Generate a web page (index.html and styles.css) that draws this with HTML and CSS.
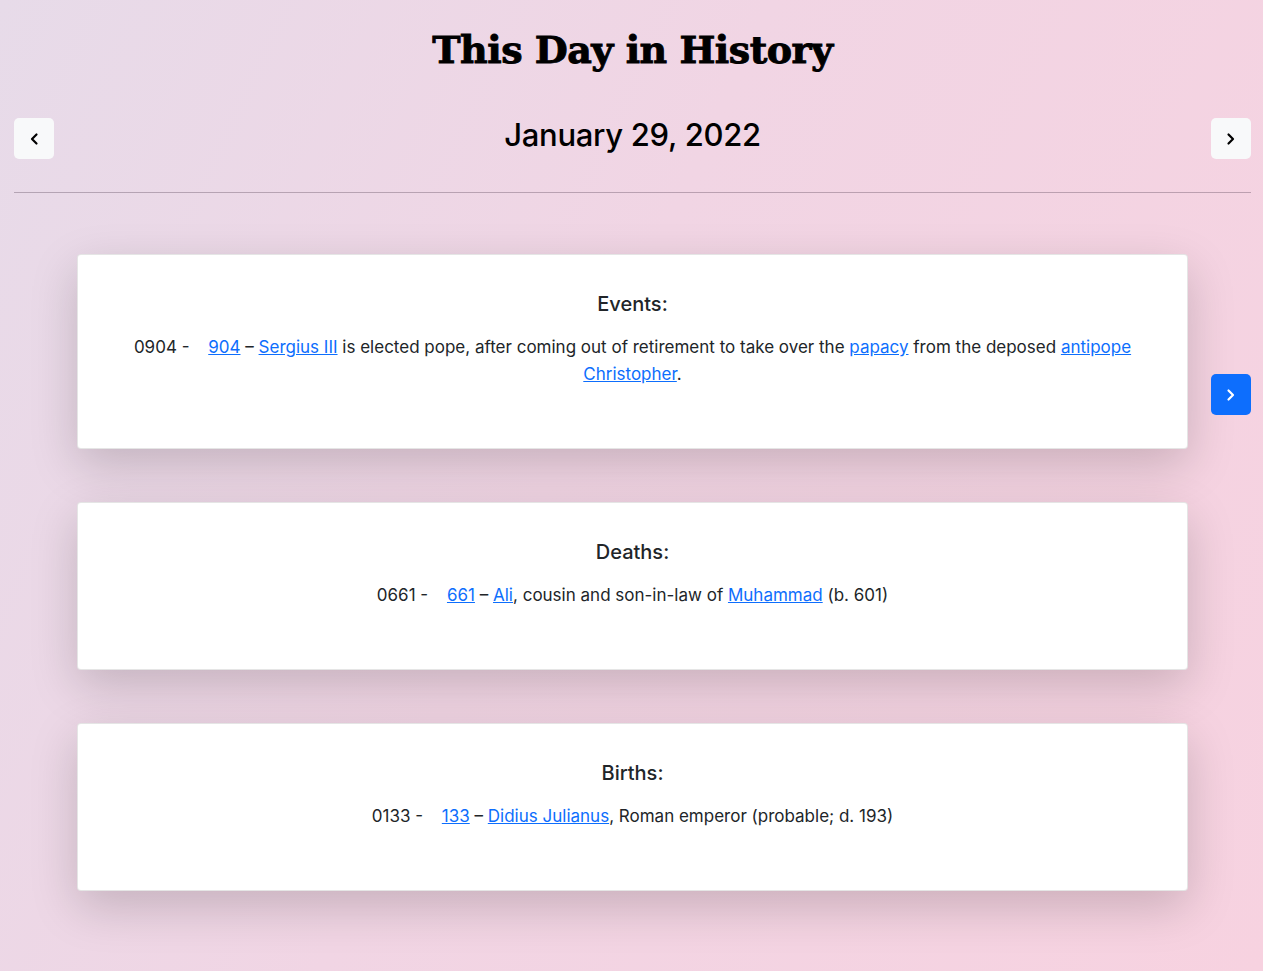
FILE: index.html
```html
<!DOCTYPE html>
<html lang="en">
<head>
<meta charset="utf-8">
<title>This Day in History</title>
<link rel="stylesheet" href="styles.css">
</head>
<body>
<div class="page">
  <h1 class="title">This Day in History</h1>
  <div class="date-row">
    <button class="btn btn-light" aria-label="Previous day">
      <svg width="16" height="16" viewBox="0 0 16 16"><path d="M10.5 3.5 6 8l4.5 4.5" fill="none" stroke="#000" stroke-width="2.2" stroke-linecap="round" stroke-linejoin="round"/></svg>
    </button>
    <h2 class="date">January 29, 2022</h2>
    <button class="btn btn-light" aria-label="Next day">
      <svg width="16" height="16" viewBox="0 0 16 16"><path d="M5.5 3.5 10 8l-4.5 4.5" fill="none" stroke="#000" stroke-width="2.2" stroke-linecap="round" stroke-linejoin="round"/></svg>
    </button>
  </div>
  <hr class="divider">

  <div class="section-row first">
    <div class="card">
      <h3 class="card-title">Events:</h3>
      <p class="card-text">0904 - <span class="gap"></span><a href="#">904</a> – <a href="#">Sergius III</a> is elected pope, after coming out of retirement to take over the <a href="#">papacy</a> from the deposed <a href="#">antipope</a> <a href="#">Christopher</a>.</p>
    </div>
    <button class="btn btn-primary side-btn" aria-label="Next event">
      <svg width="16" height="16" viewBox="0 0 16 16"><path d="M5.5 3.5 10 8l-4.5 4.5" fill="none" stroke="#fff" stroke-width="2.2" stroke-linecap="round" stroke-linejoin="round"/></svg>
    </button>
  </div>

  <div class="section-row">
    <div class="card">
      <h3 class="card-title">Deaths:</h3>
      <p class="card-text">0661 - <span class="gap"></span><a href="#">661</a> – <a href="#">Ali</a>, cousin and son-in-law of <a href="#">Muhammad</a> (b. 601)</p>
    </div>
  </div>

  <div class="section-row">
    <div class="card">
      <h3 class="card-title">Births:</h3>
      <p class="card-text">0133 - <span class="gap"></span><a href="#">133</a> – <a href="#">Didius Julianus</a>, Roman emperor (probable; d. 193)</p>
    </div>
  </div>
</div>
</body>
</html>
```

FILE: styles.css
```css
html, body {
  margin: 0;
  padding: 0;
}
body {
  min-height: 971px;
  background: linear-gradient(115deg, #e7dbe9 0%, #f1d5e4 45%, #f7d2e0 100%);
  font-family: "Inter", "Liberation Sans", sans-serif;
  color: #212529;
}
.page {
  padding: 0 12px 60px 14px;
}
.title {
  margin: 0;
  padding-top: 24px;
  text-align: center;
  font-family: "DejaVu Serif", serif;
  font-weight: 900;
  font-size: 38px;
  line-height: 52px;
  letter-spacing: -0.5px;
  color: #000;
  -webkit-text-stroke: 0.9px #000;
}
.date-row {
  display: flex;
  align-items: center;
  justify-content: space-between;
  margin-top: 42px;
}
.date {
  margin: 0;
  font-size: 31px;
  font-weight: 500;
  line-height: 36px;
  color: #000;
  letter-spacing: -0.3px;
  position: relative;
  top: -4px;
}
.btn {
  display: flex;
  align-items: center;
  justify-content: center;
  width: 40px;
  height: 41px;
  border: none;
  border-radius: 5px;
  padding: 0;
  cursor: pointer;
}
.btn-light {
  background: #f8f9fa;
}
.btn-primary {
  background: #0d6efd;
}
.divider {
  margin: 33px 0 0;
  border: 0;
  border-top: 1px solid rgba(60, 40, 60, 0.3);
}
.section-row {
  display: grid;
  grid-template-columns: 63px 1fr 63px;
  margin-top: 53px;
}
.section-row.first {
  margin-top: 61px;
}
.card {
  grid-column: 2;
  background: #fff;
  border-radius: 4px;
  border: 1px solid rgba(0, 0, 0, 0.1);
  box-shadow: 0 16px 48px rgba(0, 0, 0, 0.175);
  padding: 36px 48px 44px;
  text-align: center;
}
.side-btn {
  grid-column: 3;
  justify-self: end;
  margin-top: 120px;
}
.card-title {
  margin: 0 0 17px;
  font-size: 20px;
  font-weight: 500;
  line-height: 26px;
}
.card-text {
  margin: 0 0 16px;
  font-size: 17px;
  line-height: 27px;
}
.card-text a {
  color: #0d6efd;
  text-decoration: underline;
}
.gap {
  display: inline-block;
  width: 14px;
}
```
